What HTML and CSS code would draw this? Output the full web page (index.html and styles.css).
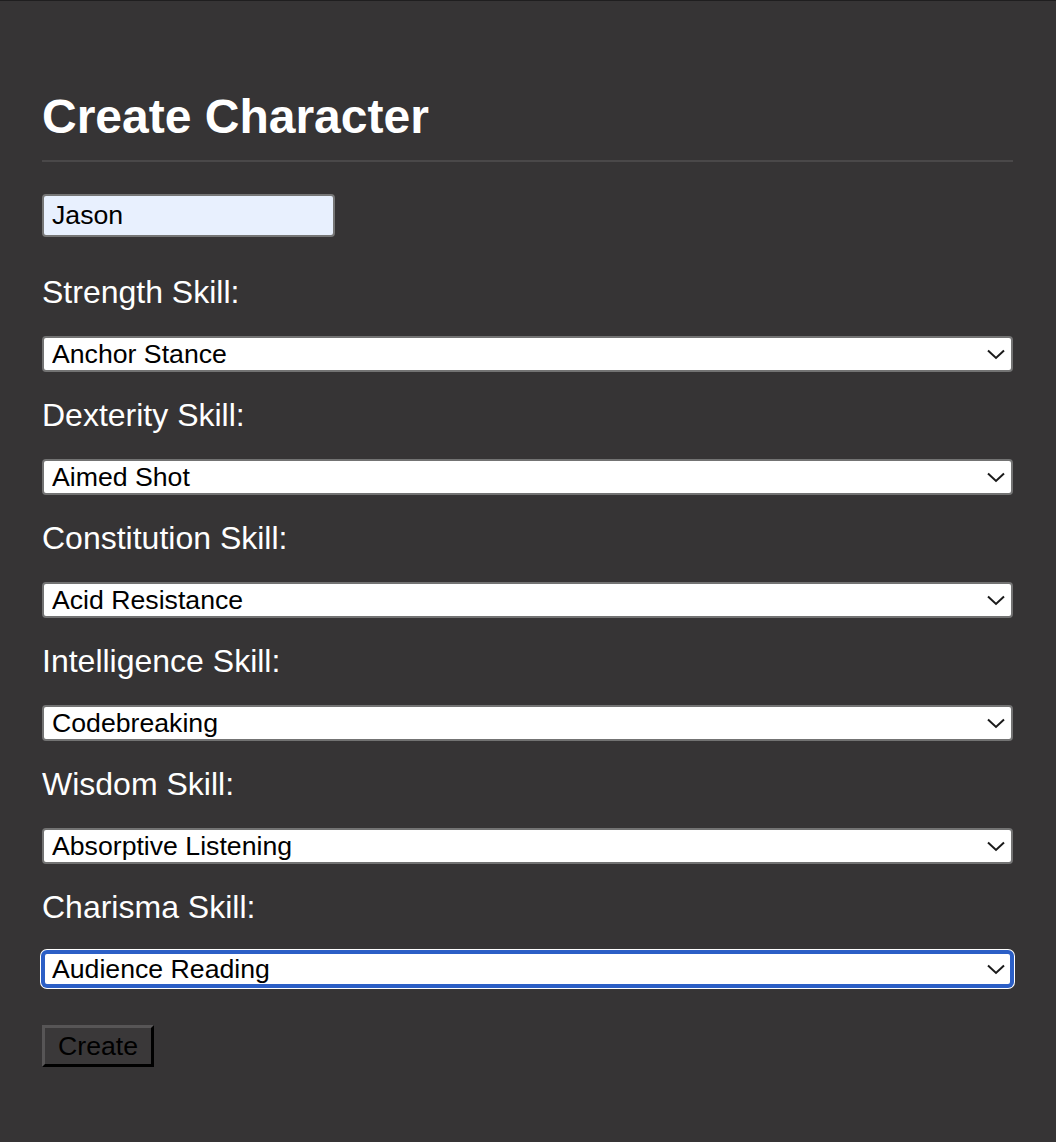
FILE: index.html
```html
<!DOCTYPE html>
<html>
<head>
<meta charset="utf-8">
<title>Create Character</title>
<link rel="stylesheet" href="styles.css">
</head>
<body>
<div class="page">
  <h1 class="title">Create Character</h1>
  <form class="form">
    <input class="name" type="text" value="Jason">
    <div class="field">
      <label class="label">Strength Skill:</label>
      <div class="select-wrap">
        <select class="select"><option>Anchor Stance</option></select>
        <svg class="chev" width="18" height="11" viewBox="0 0 18 11"><path d="M1 1.5 L9 9 L17 1.5" fill="none" stroke="#1a1a1a" stroke-width="2"/></svg>
      </div>
    </div>
    <div class="field">
      <label class="label">Dexterity Skill:</label>
      <div class="select-wrap">
        <select class="select"><option>Aimed Shot</option></select>
        <svg class="chev" width="18" height="11" viewBox="0 0 18 11"><path d="M1 1.5 L9 9 L17 1.5" fill="none" stroke="#1a1a1a" stroke-width="2"/></svg>
      </div>
    </div>
    <div class="field">
      <label class="label">Constitution Skill:</label>
      <div class="select-wrap">
        <select class="select"><option>Acid Resistance</option></select>
        <svg class="chev" width="18" height="11" viewBox="0 0 18 11"><path d="M1 1.5 L9 9 L17 1.5" fill="none" stroke="#1a1a1a" stroke-width="2"/></svg>
      </div>
    </div>
    <div class="field">
      <label class="label">Intelligence Skill:</label>
      <div class="select-wrap">
        <select class="select"><option>Codebreaking</option></select>
        <svg class="chev" width="18" height="11" viewBox="0 0 18 11"><path d="M1 1.5 L9 9 L17 1.5" fill="none" stroke="#1a1a1a" stroke-width="2"/></svg>
      </div>
    </div>
    <div class="field">
      <label class="label">Wisdom Skill:</label>
      <div class="select-wrap">
        <select class="select"><option>Absorptive Listening</option></select>
        <svg class="chev" width="18" height="11" viewBox="0 0 18 11"><path d="M1 1.5 L9 9 L17 1.5" fill="none" stroke="#1a1a1a" stroke-width="2"/></svg>
      </div>
    </div>
    <div class="field">
      <label class="label">Charisma Skill:</label>
      <div class="select-wrap">
        <select class="select focused"><option>Audience Reading</option></select>
        <svg class="chev" width="18" height="11" viewBox="0 0 18 11"><path d="M1 1.5 L9 9 L17 1.5" fill="none" stroke="#1a1a1a" stroke-width="2"/></svg>
      </div>
    </div>
    <button class="btn" type="button">Create</button>
  </form>
</div>
</body>
</html>
```

FILE: styles.css
```css
html, body {
  margin: 0;
  padding: 0;
  background: #363435;
}
body {
  border-top: 1px solid #1f1e1f;
  font-family: "Liberation Sans", Arial, sans-serif;
  color: #fff;
  min-height: 1141px;
}
.page {
  padding: 88px 43px 0 42px;
}
.title {
  margin: 0;
  font-size: 48px;
  line-height: 56px;
  font-weight: bold;
  padding-bottom: 15px;
  border-bottom: 2px solid #4a4849;
}
.form {
  display: flex;
  flex-direction: column;
  align-items: flex-start;
}
.name {
  margin: 32px 0 0 0;
  box-sizing: border-box;
  width: 293px;
  height: 43px;
  padding: 0 8px;
  border: 2px solid #767676;
  border-radius: 4px;
  background: #e8f0fe;
  font-family: "Liberation Sans", Arial, sans-serif;
  font-size: 26.67px;
  color: #000;
  outline: none;
}
.field {
  display: flex;
  flex-direction: column;
  align-self: stretch;
  margin-top: 23px;
}
.field:first-of-type {
  margin-top: 35px;
}
.label {
  font-size: 32px;
  line-height: 37px;
  padding-top: 2px;
  color: #fff;
}
.select-wrap {
  position: relative;
  margin-top: 25px;
}
.select {
  -webkit-appearance: none;
  appearance: none;
  display: block;
  width: 100%;
  box-sizing: border-box;
  height: 36px;
  margin: 0;
  padding: 0 40px 0 8px;
  border: 2px solid #737373;
  border-radius: 4px;
  background: #fff;
  font-family: "Liberation Sans", Arial, sans-serif;
  font-size: 26.67px;
  color: #000;
  outline: none;
}
.select.focused {
  border: 3px solid #2c5fc6;
  padding-left: 7px;
  border-radius: 5px;
  box-shadow: 0 0 0 1px #2c5fc6, 0 0 0 2px #fff;
}
.chev {
  position: absolute;
  right: 8px;
  top: 13px;
  pointer-events: none;
}
.btn {
  margin-top: 38px;
  box-sizing: border-box;
  height: 42px;
  padding: 0 13px;
  background: #3a3839;
  border-style: solid;
  border-width: 3px;
  border-color: #575556 #000 #000 #575556;
  font-family: "Liberation Sans", Arial, sans-serif;
  font-size: 26.67px;
  color: #000;
  line-height: 36px;
}
```
